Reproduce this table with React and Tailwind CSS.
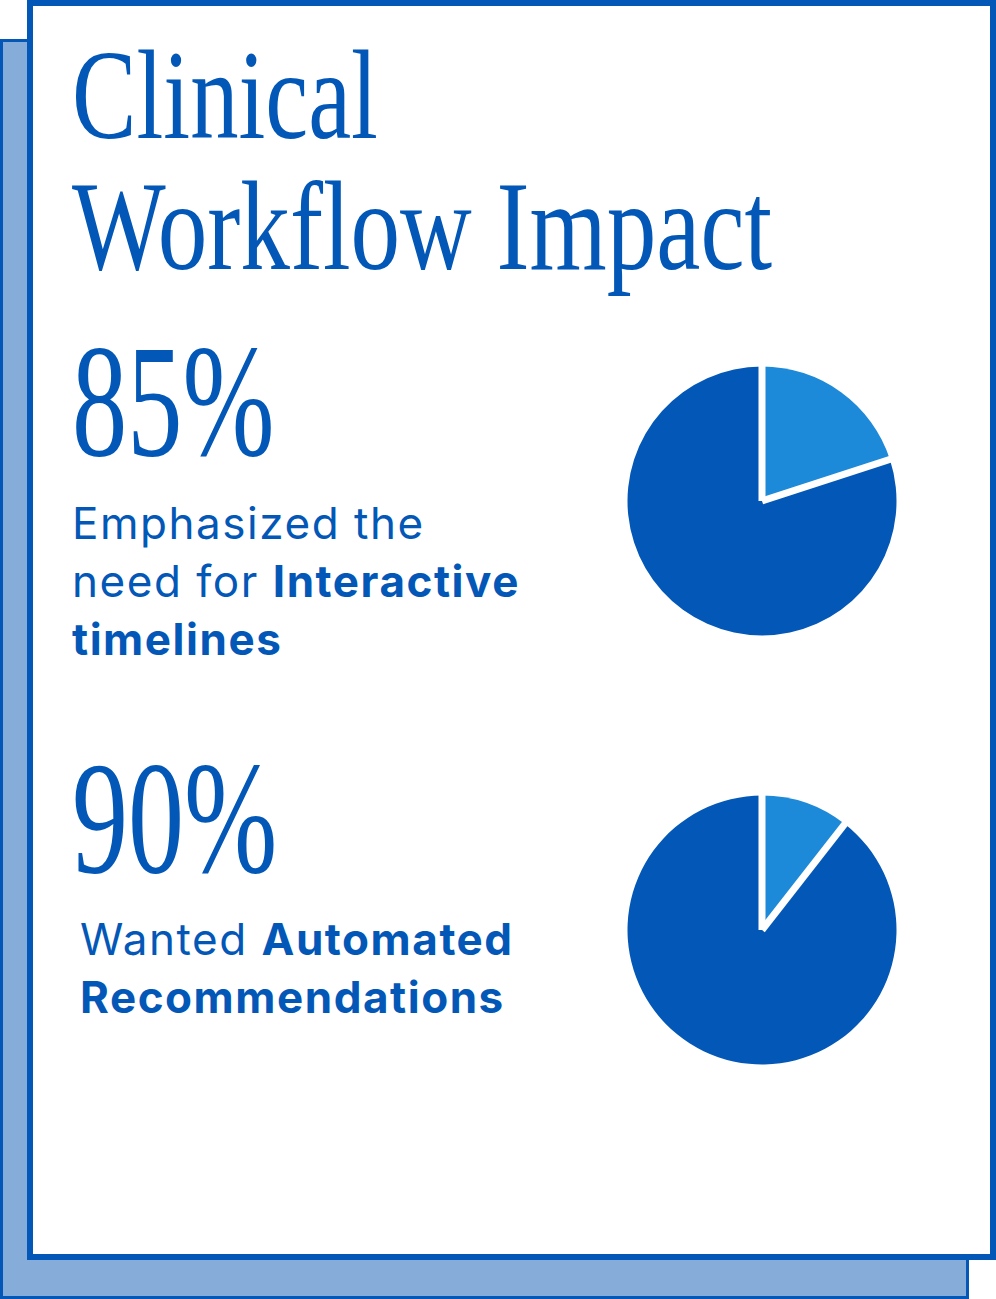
import React from 'react';

const BLUE = '#0358b7';

/** Круговая диаграмма с вырезанным сектором */
function Pie({ angle }) {
  const c = 135;
  const r = 134.5;
  const rad = (angle * Math.PI) / 180;
  const ex = c + r * Math.sin(rad);
  const ey = c - r * Math.cos(rad);
  const lx = c + r * 1.05 * Math.sin(rad);
  const ly = c - r * 1.05 * Math.cos(rad);
  return (
    <svg width="270" height="270" viewBox="0 0 270 270" className="shrink-0">
      <path d={`M${c} ${c} L${ex} ${ey} A${r} ${r} 0 1 1 ${c} ${c - r} Z`} fill={BLUE} />
      <path d={`M${c} ${c} L${c} ${c - r} A${r} ${r} 0 0 1 ${ex} ${ey} Z`} fill="#1c89d9" />
      <line x1={c} y1={c} x2={c} y2={c - r * 1.05} stroke="#fff" strokeWidth="7" />
      <line x1={c} y1={c} x2={lx} y2={ly} stroke="#fff" strokeWidth="7" />
    </svg>
  );
}

const serif = { fontFamily: '"Liberation Serif", "Times New Roman", serif' };
const sans = { fontFamily: 'Inter, "Noto Sans", sans-serif' };

export default function App() {
  return (
    <div className="relative w-[996px] h-[1299px] bg-white">
      {/* Задняя карточка */}
      <div className="absolute left-0 top-[39px] w-[969px] h-[1260px] bg-[#86acd9] border-[3px] border-[#0358b7]" />

      {/* Передняя карточка */}
      <div className="relative ml-[27px] w-[969px] h-[1260px] bg-white border-[6px] border-[#0358b7] pl-[39px] pt-[24px] pr-[93px] text-[#0358b7]">
        <h1 className="text-[128px] leading-[131px] font-normal whitespace-nowrap" style={serif}>
          <span className="block origin-left scale-x-[0.755]">Clinical</span>
          <span className="block origin-left scale-x-[0.775]">Workflow Impact</span>
        </h1>

        {/* 85% */}
        <div className="flex justify-between mt-[29px]">
          <div>
            <div className="text-[160px] leading-[160px] origin-left scale-x-[0.69] whitespace-nowrap" style={serif}>
              85%
            </div>
            <p className="mt-[13px] text-[44px] leading-[58px] tracking-[0.035em] whitespace-nowrap" style={sans}>
              Emphasized the
              <br />
              need for <span className="font-bold">Interactive</span>
              <br />
              <span className="font-bold">timelines</span>
            </p>
          </div>
          <div className="mt-[45px]">
            <Pie angle={72} />
          </div>
        </div>

        {/* 90% */}
        <div className="flex justify-between mt-[70px]">
          <div>
            <div className="text-[160px] leading-[160px] origin-left scale-x-[0.7] whitespace-nowrap" style={serif}>
              90%
            </div>
            <p className="mt-[12px] ml-[8px] text-[44px] leading-[58px] tracking-[0.035em] whitespace-nowrap" style={sans}>
              Wanted <span className="font-bold">Automated</span>
              <br />
              <span className="font-bold">Recommendations</span>
            </p>
          </div>
          <div className="mt-[57px]">
            <Pie angle={38} />
          </div>
        </div>
      </div>
    </div>
  );
}
